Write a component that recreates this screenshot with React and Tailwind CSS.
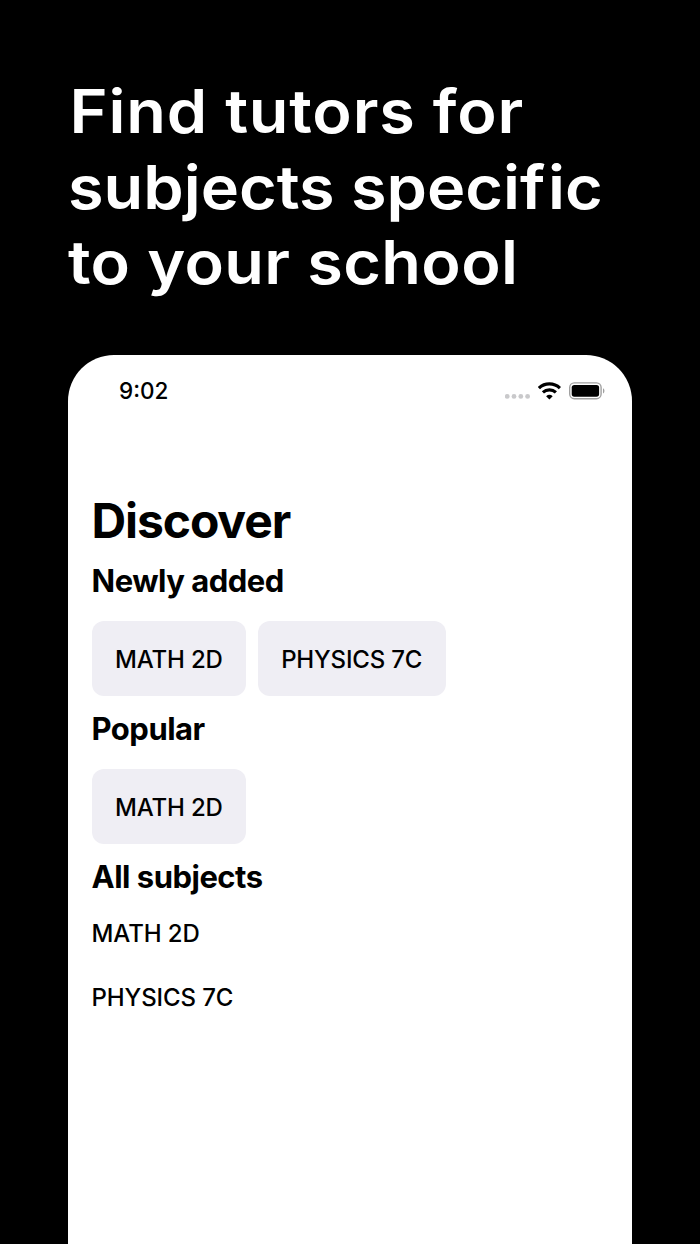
const newlyAdded = ['MATH 2D', 'PHYSICS 7C']
const popular = ['MATH 2D']
const allSubjects = ['MATH 2D', 'PHYSICS 7C']

function StatusBar() {
  return (
    <div className="flex h-[71px] items-center justify-between pl-[51px] pr-[26px]">
      <span className="text-[22.5px] font-medium">9:02</span>
      <div className="flex items-center gap-[7px]">
        <svg className="mt-[11px]" width="26" height="6" viewBox="0 0 26 6" fill="#c9c9cb">
          <circle cx="2.2" cy="3.4" r="2.4" />
          <circle cx="9" cy="3.4" r="2.4" />
          <circle cx="15.8" cy="3.4" r="2.4" />
          <circle cx="22.6" cy="3.4" r="2.4" />
        </svg>
        <svg width="24" height="18" viewBox="0 0 24 18" fill="none" stroke="#000" strokeWidth="3.2">
          <path d="M0.9 6.1a15.3 15.3 0 0 1 21 0" />
          <path d="M4.9 10.4a9.7 9.7 0 0 1 13 0" />
          <path d="M11.4 17.6l-3.3-3.4a5 5 0 0 1 6.6 0z" fill="#000" stroke="none" />
        </svg>
        <svg width="37" height="18" viewBox="0 0 37 18">
          <rect x="0.7" y="0.9" width="31.4" height="15.8" rx="4.6" fill="none" stroke="#a0a0a0" strokeWidth="1.4" />
          <rect x="2.7" y="2.9" width="27.4" height="11.8" rx="2.6" fill="#000" />
          <path d="M34 6.2c1.9 0.9 1.9 4.3 0 5.2z" fill="#a0a0a0" />
        </svg>
      </div>
    </div>
  )
}

function SubjectCards({ subjects }) {
  return (
    <div className="flex gap-[11.5px]">
      {subjects.map((subject) => (
        <div
          key={subject}
          className="flex h-[75px] items-center rounded-[12px] bg-[#efeef4] px-[23.5px] pt-[2px] text-[24px] font-medium tracking-[-0.18px]"
        >
          {subject}
        </div>
      ))}
    </div>
  )
}

export default function App() {
  return (
    <div className="h-[1244px] w-[700px] overflow-hidden bg-black px-[68px] font-['Inter',sans-serif]">
      <h1 className="h-[355px] whitespace-nowrap pt-[74px] text-[60px] font-semibold leading-[75.5px] text-white">
        <span className="block origin-left scale-x-108 pl-[1.5px] tracking-[0.75px]">Find tutors for</span>
        <span className="block origin-left scale-x-108">
          subjects speci<span className="tracking-[2.5px]">f</span>ic
        </span>
        <span className="block origin-left scale-x-108 tracking-[0.35px]">to your school</span>
      </h1>
      <div className="h-[889px] w-[564px] rounded-t-[46px] bg-white text-black">
        <StatusBar />
        <div className="whitespace-nowrap px-[23.5px] pt-[66px]">
          <h2 className="h-[60px] text-[48px] font-bold leading-[58px] tracking-[-1.1px]">Discover</h2>
          <h3 className="h-[69px] pt-[10px] text-[31px] font-bold leading-[38px] tracking-[-0.5px]">Newly added</h3>
          <SubjectCards subjects={newlyAdded} />
          <h3 className="h-[73px] pt-[14px] text-[31px] font-bold leading-[38px] tracking-[-0.5px]">Popular</h3>
          <SubjectCards subjects={popular} />
          <h3 className="pt-[14px] text-[31px] font-bold leading-[38px] tracking-[-0.5px]">All subjects</h3>
          <ul className="pt-[6px] text-[24px] font-medium tracking-[-0.1px]">
            {allSubjects.map((subject) => (
              <li key={subject} className="flex h-16 items-center">{subject}</li>
            ))}
          </ul>
        </div>
      </div>
    </div>
  )
}
